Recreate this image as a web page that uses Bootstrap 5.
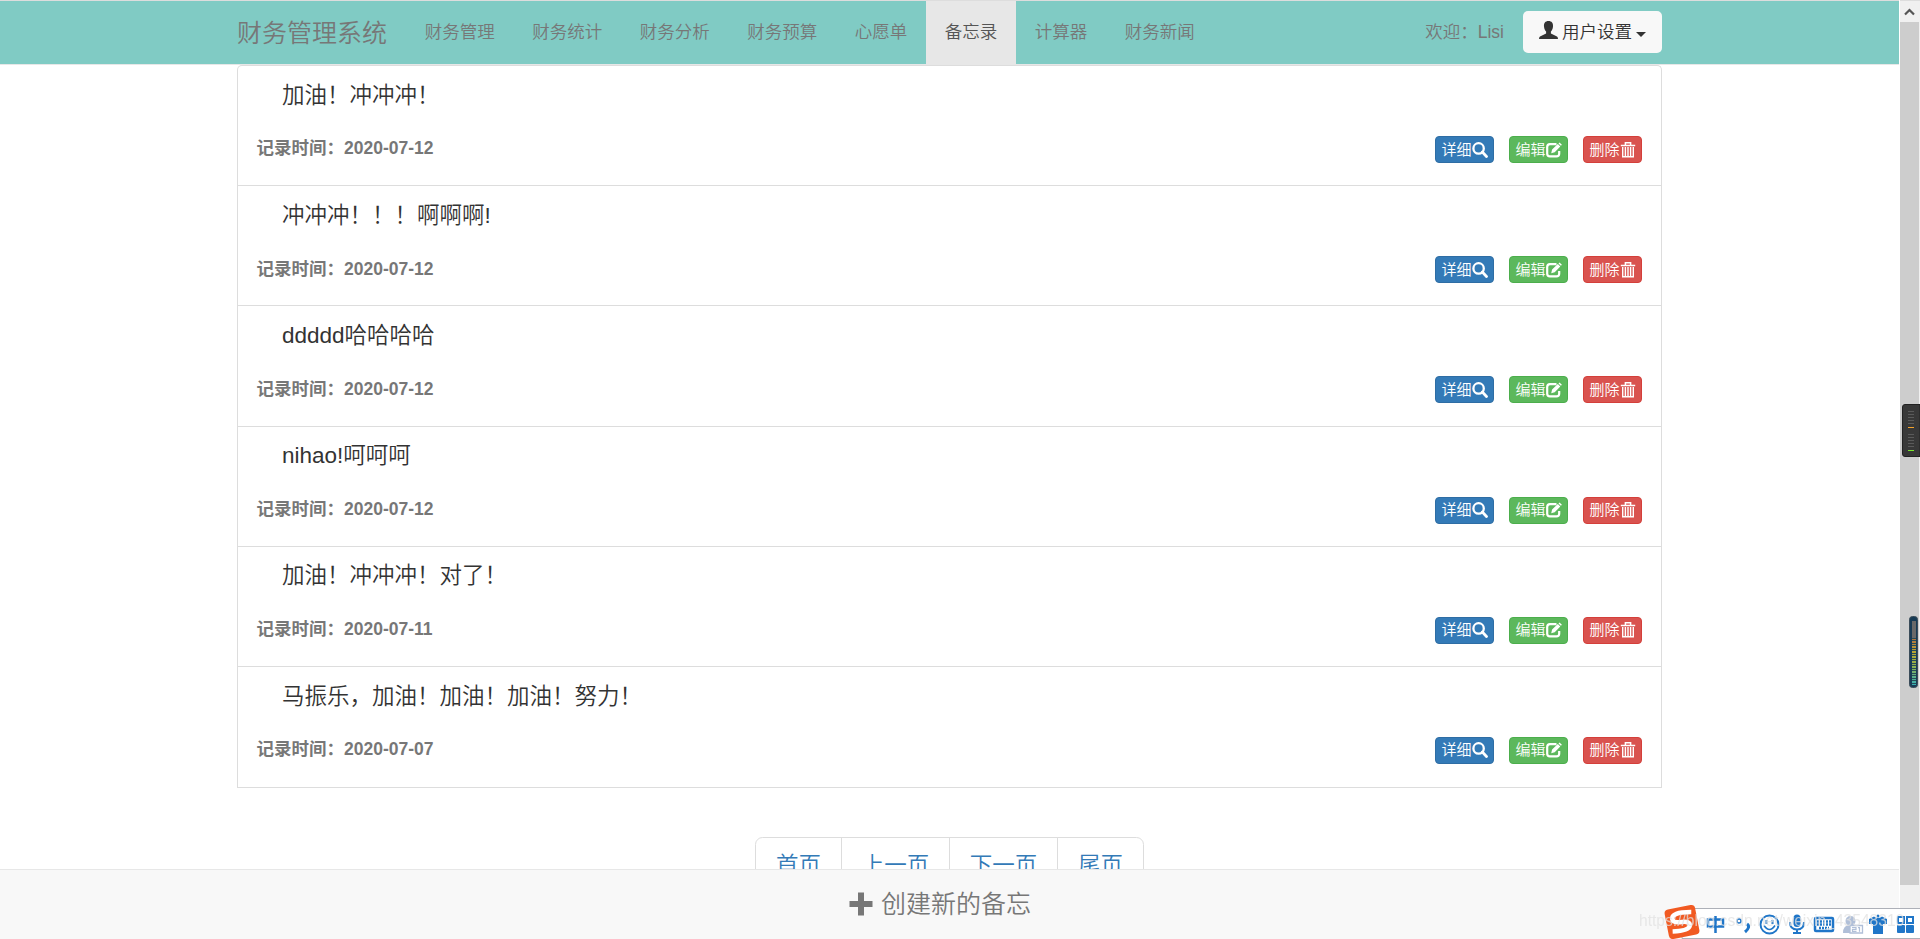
<!DOCTYPE html>
<html lang="zh-CN">
<head>
<meta charset="utf-8">
<title>备忘录</title>
<link href="https://cdn.jsdelivr.net/npm/bootstrap@5.3.0/dist/css/bootstrap.min.css" rel="stylesheet">
<style>
html,body{height:939px;overflow:hidden}
body{font-family:"Liberation Sans","Noto Sans CJK SC",sans-serif;font-size:17.5px;line-height:25px;color:#333;background:#fff}
.page{width:1900px;height:939px;padding-left:0;padding-right:1px;overflow:hidden}
.wrap{width:1425px;margin-left:237px}
.topnav{height:65px;border-top:1px solid #ddd;border-bottom:1px solid #e7e7e7;background:#80cbc4;color:#777;width:1899px;padding:0;flex:none}
.brandname{font-size:25px;width:150px;margin-right:19px;white-space:nowrap;color:#777;font-weight:350}
.topnav .nav-link{color:#777;padding:0 18.75px;line-height:62px;height:63px;font-size:17.5px;font-weight:350;white-space:nowrap}
.topnav .nav-link.active{color:#555;background:#e7e7e7;height:64px}
.greet{font-weight:350;margin:-2px 19px 0 0}
.userbtn{background:#f8f8f8;color:#333;width:139px;height:42px;border:0;border-radius:5px;font-size:17.5px;padding:0;line-height:40px;font-weight:350;margin-top:-2px}
.memos{border-radius:5px 5px 0 0;--bs-list-group-border-color:#ddd;--bs-list-group-border-radius:5px}
.memos .list-group-item{height:120.2px;padding:0 19px 0 19px;color:#333;border-width:1px 1px 0 1px;border-color:#ddd;border-radius:0}
.memos .list-group-item:first-child{border-radius:5px 5px 0 0}
.memos .list-group-item:last-child{border-bottom-width:1px;height:122px}
.memos .list-group-item + .list-group-item{border-top-width:1px}
.memotitle{font-size:22.5px;line-height:30px;padding:14.6px 0 0 25px;height:44px;font-weight:350}
.memofoot{height:54px;padding-top:23px}
.stamp{color:#777;font-size:17.5px;font-weight:700;line-height:30px;padding-top:.4px;margin-left:-.5px}
.acts{gap:15px;padding-top:3px}
.act{width:59px;height:27px;padding:0;font-size:15px;line-height:24px;border-radius:4px;color:#fff;border:1px solid;display:flex;justify-content:center;align-items:center;font-weight:350;white-space:nowrap;text-decoration:none}
.act-view{background:#337ab7;border-color:#2e6da4}
.act-edit{background:#5cb85c;border-color:#4cae4c}
.act-del{background:#d9534f;border-color:#d43f3a}
.pages{margin:49px 0 0 518px;--bs-pagination-color:#337ab7;--bs-pagination-border-color:#ddd}
.pages .page-link{font-size:22.5px;line-height:30px;padding:13px 0 12px;text-align:center;width:109px;font-weight:350}
.pages li:first-child .page-link{width:87px;border-radius:7.5px 0 0 7.5px}
.pages li:last-child .page-link{width:87px;border-radius:0 7.5px 7.5px 0}
.create{position:fixed;left:0;bottom:0;width:1899px;height:70px;background:#f8f8f8;border-top:1px solid #e7e7e7;color:#777;font-size:25px;font-weight:350;padding:0 19px 1px 0}
.scroller{position:fixed;right:0;top:0;width:20px;height:939px;background:#f0f0f0;border-top:1px solid #ddd}
.thumb{height:863px;background:#cdcdcd;width:19px}
.meter{position:fixed;right:0;top:404px}
.meter2{position:fixed;left:1908px;top:616px}
.mark-url{position:fixed;left:1639px;top:910px;font-size:15.6px;line-height:22px;color:rgba(225,225,225,.75);z-index:3;white-space:nowrap}
.ime{position:fixed;left:1660px;top:900px;z-index:2}
</style>
<script src="https://cdn.jsdelivr.net/npm/bootstrap@5.3.0/dist/js/bootstrap.bundle.min.js"></script>
</head>
<body>
<svg width="0" height="0" class="d-none">
<symbol id="i-search" viewBox="0 0 16 16"><circle cx="6.600" cy="6.400" r="5.200" fill="none" stroke="#fff" stroke-width="2.300"/><path d="M10.300 10.100l4.200 4.300" stroke="#fff" stroke-width="2.800" stroke-linecap="round"/></symbol>
<symbol id="i-edit" viewBox="0 0 16 16"><path d="M10.500 2.200H4Q1.200 2.200 1.200 5v6.800q0 2.600 2.800 2.600h6.400q2.800 0 2.800-2.600V9" fill="none" stroke="#fff" stroke-width="2.200"/><path d="M5.200 11.200l.9-3.600 5.700-5.600 2.500 2.500-5.600 5.800zM12.500 1.400l1-1 2.400 2.400-1 1z" fill="#fff"/></symbol>
<symbol id="i-trash" viewBox="0 0 16 16"><path d="M.8 3.400h14.400M5.400 3V.8h5.200V3" fill="none" stroke="#fff" stroke-width="1.500"/><path d="M2.700 5v9.700h10.600V5M5.400 5v9M8 5v9M10.600 5v9" fill="none" stroke="#fff" stroke-width="1.400"/></symbol>
</svg>
<div class="page">
<nav class="navbar topnav">
<div class="wrap d-flex align-items-center">
<span class="brandname">财务管理系统</span>
<ul class="nav flex-nowrap">
<li><a class="nav-link">财务管理</a></li><li><a class="nav-link">财务统计</a></li><li><a class="nav-link">财务分析</a></li><li><a class="nav-link">财务预算</a></li><li><a class="nav-link">心愿单</a></li><li><a class="nav-link active">备忘录</a></li><li><a class="nav-link">计算器</a></li><li><a class="nav-link">财务新闻</a></li>
</ul>
<span class="greet ms-auto">欢迎：Lisi</span>
<button class="btn userbtn d-flex align-items-center justify-content-center"><svg width="19" height="19" viewBox="0 0 19 19" class="me-1 mb-1"><path d="M9.500 0C12.700 0 14.300 2.200 14 5.500C13.800 8 12.900 9.500 11.900 10.600V12.500L18 15.600Q19 16.300 19 18H0Q0 16.300 1 15.600L7.100 12.500V10.600C6.100 9.500 5.200 8 5 5.500C4.700 2.200 6.300 0 9.500 0Z" fill="#333"/></svg>用户设置<svg width="10" height="5" viewBox="0 0 10 5" class="ms-1 mt-1"><path d="M0 0h10L5 5z" fill="#333"/></svg></button>
</div>
</nav>
<main class="wrap">
<ul class="list-group memos" id="memos"></ul>
<ul class="pagination pages"><li><a class="page-link">首页</a></li><li class="page-item"><a class="page-link">上一页</a></li><li class="page-item"><a class="page-link">下一页</a></li><li class="page-item"><a class="page-link">尾页</a></li></ul>
</main>
</div>
<footer class="create d-flex justify-content-center align-items-center"><svg width="24" height="24" viewBox="0 0 24 24" class="me-2"><path d="M9 .5h6V9h8.500v6H15v8.500H9V15H.5V9H9z" fill="#777"/></svg>创建新的备忘</footer>
<div class="scroller"><svg width="20" height="21" class="d-block"><path d="M5 13.500l4.500-4.500 4.500 4.500" fill="none" stroke="#555" stroke-width="2.200"/></svg><div class="thumb"></div></div>
<svg class="meter" width="18" height="53"><path d="M18 .5H3Q.5.500.5 3v47q0 2.500 2.500 2.500h15z" fill="#383838" stroke="#222"/><path d="M6 7.500h6m-6 3h6m-6 3h6m-6 3h6m-6 3h6m-6 11h6m-6 3h6m-6 3h6m-6 3h6m-6 3h6" stroke="#5a5a5a"/><path d="M6 23.500h6" stroke="#f5a32c"/><path d="M6 46.500h6" stroke="#7be72c"/></svg>
<svg class="meter2" width="11" height="72"><defs><linearGradient id="lv" x2="0" y2="1"><stop stop-color="#b0703f"/><stop offset=".3" stop-color="#b9a532"/><stop offset=".6" stop-color="#8fb150"/><stop offset="1" stop-color="#35aeb5"/></linearGradient><pattern id="dash" width="5" height="5" patternUnits="userSpaceOnUse"><path d="M0 4.500h5M0 2.500h5" stroke="#284c58"/></pattern></defs><rect x="1.500" y=".5" width="8" height="71" rx="3" fill="#183b55" stroke="#3b4c59"/><rect x="4" y="5" width="4" height="17" fill="#696969"/><rect x="4" y="22" width="4" height="47" fill="url(#lv)"/><rect x="4" y="22" width="4" height="47" fill="url(#dash)"/></svg>
<svg class="ime" width="260" height="39"><path d="M22 8.500h240v30H22z" fill="#fff" stroke="#adb0b8"/><g transform="rotate(-11 22 22)"><rect x="6.500" y="7" width="31" height="30" rx="4" fill="#f15a22"/><path d="M33 14Q13 10 13 17.500q0 4 9 4.500 8 .5 7 5-2 5-18 2.500" fill="none" stroke="#fff" stroke-width="4.500"/></g>
<g fill="none" stroke="#2076c8" stroke-width="2.500"><path d="M48 19.500h15v7H48zM55.500 16v17"/><circle cx="79" cy="21" r="2" stroke-width="1.500"/><path d="M87 24q4 3-2 8" stroke-width="3"/><circle cx="109.500" cy="24.500" r="9" stroke-width="2"/><path d="M104 25.500q5.500 8 11 0" stroke-width="1.500"/><path d="M106.500 20v4M112.500 20v4" stroke-width="2"/><path d="M130 22q0 7.500 7 7.500t7-7.500M137 29v4.500m-4-.5h8" stroke-width="2"/><rect x="155" y="18" width="18" height="13" rx="1"/><path d="M157 21.500h14M157 24.500h14M159 28h10" stroke-dasharray="2 1"/></g><rect x="133.500" y="14.500" width="7" height="12.500" rx="3.500" fill="#2076c8"/>
<g fill="#b0bfd8"><circle cx="190.500" cy="21" r="5"/><path d="M183 33q0-8 7-8v8z"/></g><path d="M190 25.500h12.500v7.500H190z" fill="#fff" stroke="#b0bfd8" stroke-width="1.300"/><path d="M192 27.700h4v1.800h-3.500v1.800h4M198 27.700h1.500v4" fill="none" stroke="#b0bfd8" stroke-width="1.200"/>
<g fill="#2076c8"><path d="M209 19l5-2.500q4 3 8 0l5 2.500v5h-4v10h-10V24h-4z"/><circle cx="218" cy="16" r="1.500"/><rect x="237" y="25" width="8" height="8" rx="1"/><rect x="246" y="25" width="8" height="8" rx="1"/></g><path d="M238 17h6v6h-6zM247 17h6v6h-6z" fill="none" stroke="#2076c8" stroke-width="2"/></svg>
<span class="mark-url">https://blog.csdn.net/weixin_43548310</span>
<script>
const memos=[["加油！冲冲冲！","2020-07-12"],["冲冲冲！！！啊啊啊!","2020-07-12"],["ddddd哈哈哈哈","2020-07-12"],["nihao!呵呵呵","2020-07-12"],["加油！冲冲冲！对了！","2020-07-11"],["马振乐，加油！加油！加油！努力！","2020-07-07"]];
const icon=n=>`<svg width="16" height="16"><use href="#i-${n}"/></svg>`;
document.getElementById("memos").innerHTML=memos.map(([t,d])=>`<li class="list-group-item"><div class="memotitle">${t}</div><div class="d-flex justify-content-between memofoot"><div class="stamp">记录时间：${d}</div><div class="d-flex acts"><a class="act act-view">详细${icon("search")}</a><a class="act act-edit">编辑${icon("edit")}</a><a class="act act-del">删除${icon("trash")}</a></div></div></li>`).join("");
</script>
</body>
</html>
